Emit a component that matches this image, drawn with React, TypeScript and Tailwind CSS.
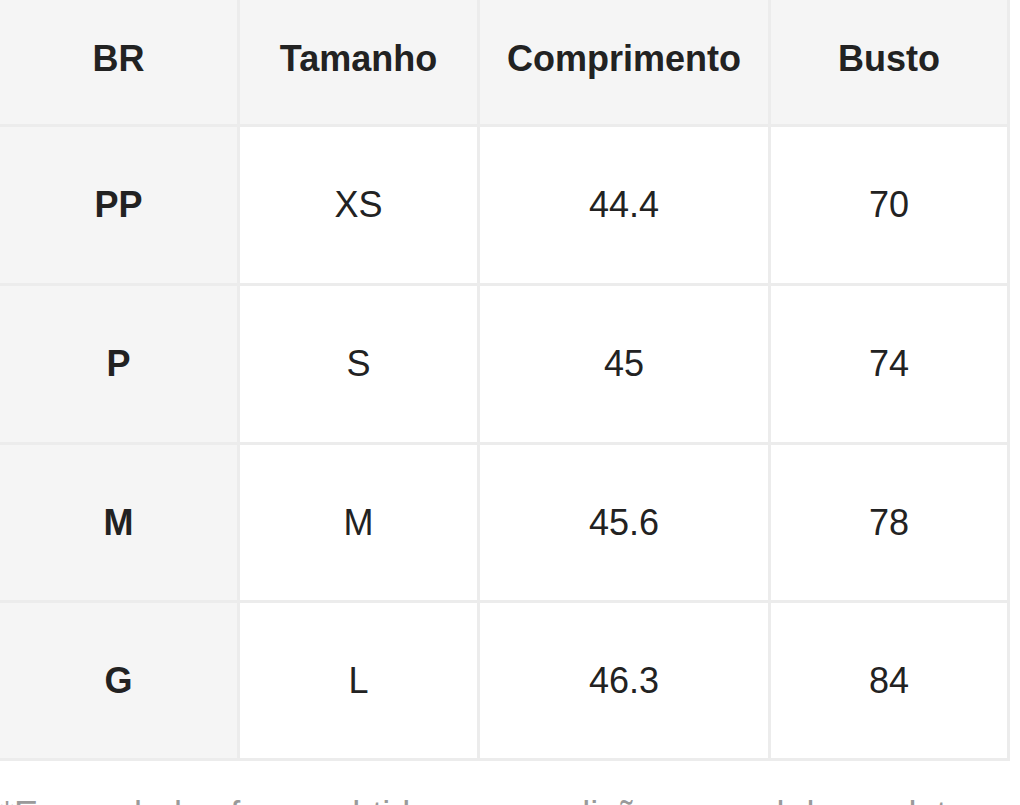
const headers = ["BR", "Tamanho", "Comprimento", "Busto"];

const rows = [
  ["PP", "XS", "44.4", "70"],
  ["P", "S", "45", "74"],
  ["M", "M", "45.6", "78"],
  ["G", "L", "46.3", "84"],
];

const App = () => {
  return (
    <div
      className="w-[1020px] h-[805px] overflow-hidden bg-white text-[#222]"
      style={{ fontFamily: '"Liberation Sans", Arial, sans-serif' }}
    >
      <div className="grid w-fit grid-cols-[237px_237px_288px_236px] grid-rows-[124px_156px_156px_155px_155px] gap-[3px] bg-[#ececec] pr-[3px] pb-[3px]">
        {headers.map((h) => (
          <div
            key={h}
            className="flex items-center justify-center bg-[#f5f5f5] pb-[7px] text-[36px] font-bold"
          >
            {h}
          </div>
        ))}
        {rows.map((row) =>
          row.map((cell, i) => (
            <div
              key={row[0] + i}
              className={
                i === 0
                  ? "flex items-center justify-center bg-[#f5f5f5] text-[36px] font-bold"
                  : "flex items-center justify-center bg-white text-[36px]"
              }
            >
              {cell}
            </div>
          ))
        )}
      </div>

      <p className="mt-[27px] whitespace-nowrap text-[36px] text-[#9a9a9a]">
        *Esses dados foram obtidos por medição manual do produto, pode haver uma
        diferença de 1-2 cm.
      </p>
    </div>
  );
};

export default App;
